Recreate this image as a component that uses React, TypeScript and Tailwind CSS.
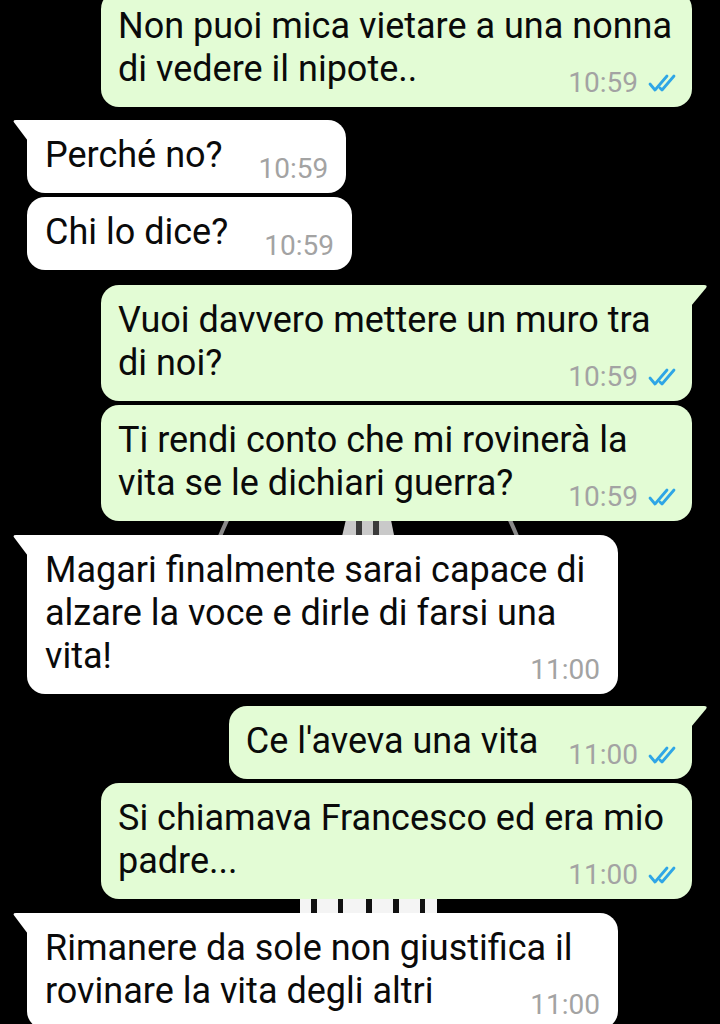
import React from 'react';

type Msg = {
  from: 'in' | 'out';
  lines: string[];
  time: string;
  tail?: boolean;
  wide?: boolean;
  mt: string;
};

const messages: Msg[] = [
  { from: 'out', lines: ['Non puoi mica vietare a una nonna', 'di vedere il nipote..'], time: '10:59', wide: true, mt: 'mt-[-9px]' },
  { from: 'in', lines: ['Perché no?'], time: '10:59', tail: true, mt: 'mt-[13px]' },
  { from: 'in', lines: ['Chi lo dice?'], time: '10:59', mt: 'mt-[4px]' },
  { from: 'out', lines: ['Vuoi davvero mettere un muro tra', 'di noi?'], time: '10:59', tail: true, wide: true, mt: 'mt-[15px]' },
  { from: 'out', lines: ['Ti rendi conto che mi rovinerà la', 'vita se le dichiari guerra?'], time: '10:59', wide: true, mt: 'mt-[4px]' },
  { from: 'in', lines: ['Magari finalmente sarai capace di', 'alzare la voce e dirle di farsi una', 'vita!'], time: '11:00', tail: true, wide: true, mt: 'mt-[14px]' },
  { from: 'out', lines: ["Ce l'aveva una vita"], time: '11:00', tail: true, mt: 'mt-[12px]' },
  { from: 'out', lines: ['Si chiamava Francesco ed era mio', 'padre...'], time: '11:00', wide: true, mt: 'mt-[4px]' },
  { from: 'in', lines: ['Rimanere da sole non giustifica il', 'rovinare la vita degli altri'], time: '11:00', tail: true, wide: true, mt: 'mt-[14px]' },
];

function Ticks() {
  return (
    <svg width="31" height="20" viewBox="0 0 31 20" fill="none" stroke="#2fa6e6" strokeWidth="2.8" strokeLinecap="round" strokeLinejoin="round">
      <path d="M3 11 L8 17 L20 3" />
      <path d="M13 15 L15 17 L27 3" />
    </svg>
  );
}

// fondo: pezzi dello sfondo che si vedono tra i messaggi
function Wallpaper() {
  return (
    <svg className="absolute inset-0" width="720" height="1024" viewBox="0 0 720 1024">
      <path d="M230 514 Q224 526 216 546" fill="none" stroke="#8a8a8a" strokeWidth="4" />
      <path d="M507 514 Q513 526 521 546" fill="none" stroke="#8a8a8a" strokeWidth="4" />
      <path d="M347 515 L390 515 L396 545 L340 545 Z" fill="#c9c9c9" />
      <rect x="356" y="512" width="6" height="36" fill="#3a3a3a" />
      <rect x="373" y="512" width="6" height="36" fill="#3a3a3a" />
      <rect x="300" y="880" width="137" height="50" fill="#f4f4f4" />
      <rect x="311" y="880" width="6" height="50" fill="#111" />
      <rect x="338" y="880" width="5" height="50" fill="#111" />
      <rect x="366" y="880" width="6" height="50" fill="#111" />
      <rect x="393" y="880" width="6" height="50" fill="#111" />
      <rect x="420" y="880" width="5" height="50" fill="#111" />
    </svg>
  );
}

function Bubble({ m }: { m: Msg }) {
  const out = m.from === 'out';
  const last = m.lines[m.lines.length - 1];
  const rest = m.lines.slice(0, -1);

  const base = out
    ? 'self-end bg-[#e3fcd5] pl-[17px] pr-[14px]'
    : 'self-start bg-white pl-[18px] pr-[18px]';
  const corner = m.tail ? (out ? 'rounded-[18px] rounded-tr-none' : 'rounded-[18px] rounded-tl-none') : 'rounded-[18px]';
  const width = m.wide ? 'w-[591px]' : '';

  return (
    <div className={`relative pt-[14px] pb-[16px] ${base} ${corner} ${width} ${m.mt}`}>
      {m.tail && out && (
        <svg className="absolute right-[-16px] top-0" width="17" height="22" viewBox="0 0 17 22">
          <path d="M0 0 H13 Q17 0 15 3 L0 21 Z" fill="#e3fcd5" />
        </svg>
      )}
      {m.tail && !out && (
        <svg className="absolute left-[-14px] top-0" width="15" height="22" viewBox="0 0 15 22">
          <path d="M15 0 H3 Q-1 0 1.5 3 L15 21 Z" fill="#ffffff" />
        </svg>
      )}
      {rest.map((l) => (
        <p key={l} className="text-[36px] leading-[43px] text-[#0a0a0a] whitespace-nowrap">{l}</p>
      ))}
      <div className={`flex items-end justify-between ${out ? 'gap-[30px]' : 'gap-[36px]'}`}>
        <span className="text-[36px] leading-[43px] text-[#0a0a0a] whitespace-nowrap">{last}</span>
        <span className="flex items-center gap-[9px] mb-[-6px] text-[28px] leading-[28px] text-[#a3a3a3]">
          {m.time}
          {out && <Ticks />}
        </span>
      </div>
    </div>
  );
}

export default function App() {
  return (
    <div className="relative w-[720px] h-[1024px] overflow-hidden bg-black font-[Roboto,sans-serif]">
      <Wallpaper />
      <div className="relative flex flex-col pl-[27px] pr-[28px]">
        {messages.map((m, i) => (
          <Bubble key={i} m={m} />
        ))}
      </div>
    </div>
  );
}
